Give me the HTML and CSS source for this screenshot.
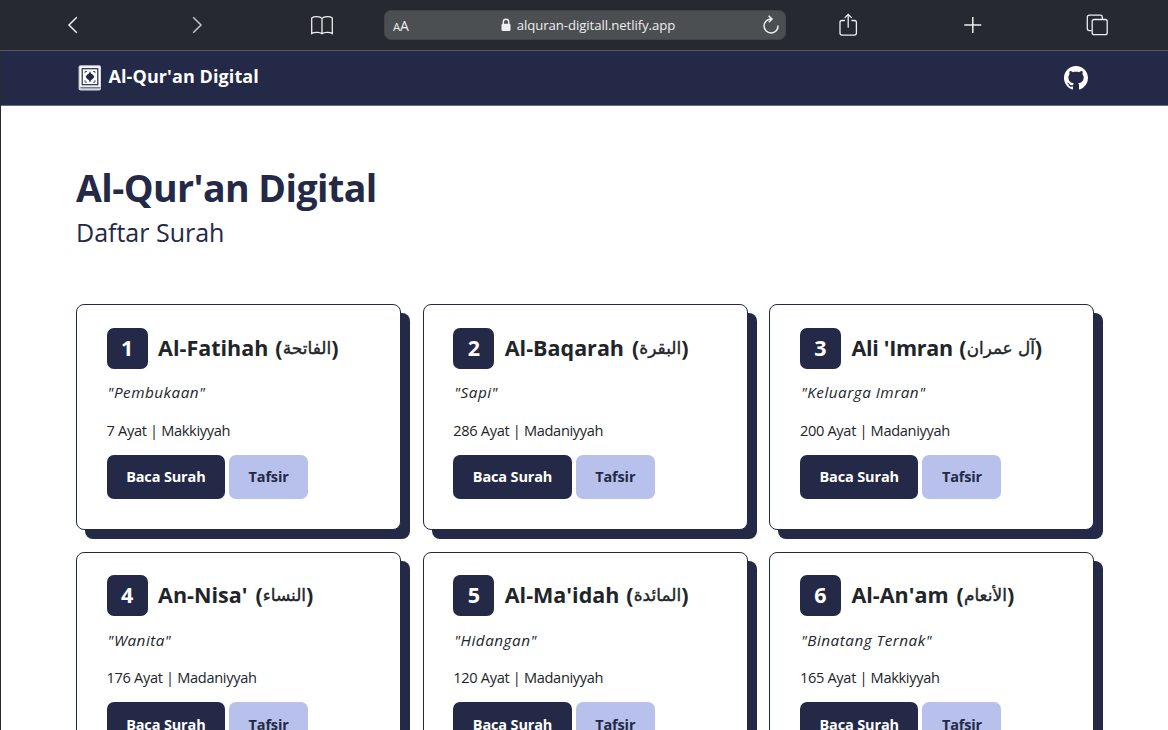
FILE: index.html
```html
<!DOCTYPE html>
<html lang="id">
<head>
<meta charset="utf-8">
<title>Al-Qur'an Digital</title>
<link rel="stylesheet" href="styles.css">
</head>
<body>
<div class="toolbar">
  <svg class="ico" width="26" height="26" viewBox="0 0 26 26"><path d="M16.8 5.2 9 13l7.8 7.8"/></svg>
  <svg class="ico dim" width="26" height="26" viewBox="0 0 26 26"><path d="m9.200 5.200 7.800 7.800-7.800 7.800"/></svg>
  <svg class="ico thin" width="26" height="26" viewBox="0 0 26 26"><path d="M13 6.400v15M13 6.400C11 4.200 5 4.100 2.700 6v15.500c2.600-1.600 8.300-1.600 10.300.2 2-1.800 7.700-1.800 10.300-.2V6C21 4.100 15 4.200 13 6.400Z"/></svg>
  <div class="address">
    <span class="reader"><small>A</small>A</span>
    <span class="site"><svg width="10" height="14" viewBox="0 0 10 14"><path d="M2.300 6V4a2.700 2.700 0 0 1 5.400 0v2" fill="none" stroke="#eceeef" stroke-width="1.400"/><rect x=".5" y="5.700" width="9" height="7.300" rx="1.200" fill="#eceeef"/></svg><span class="url">alquran-digitall.netlify.app</span></span>
    <svg class="reload" width="18" height="20" viewBox="0 0 18 20"><path d="M9.200 4A7 7 0 1 0 16 10.500M6.600.8 10 4 6.800 7.200"/></svg>
  </div>
  <svg class="ico thin" width="26" height="26" viewBox="0 0 26 26"><path d="M10 8.500H7a2 2 0 0 0-2 2v10.600a2 2 0 0 0 2 2h12.400a2 2 0 0 0 2-2V10.500a2 2 0 0 0-2-2h-3M13.200 15.800V2.400M9.700 5.900l3.500-3.500 3.500 3.500"/></svg>
  <svg class="ico" width="26" height="26" viewBox="0 0 26 26"><path d="M12.800 5v16M4.300 13h17"/></svg>
  <svg class="ico thin" width="26" height="26" viewBox="0 0 26 26"><path d="M7.600 18.600H5.300a2 2 0 0 1-2-2V5.200a2 2 0 0 1 2-2h11a2 2 0 0 1 2 2v2.300"/><rect x="8.200" y="7.500" width="15" height="15.200" rx="2"/></svg>
</div>

<div class="page">
  <nav class="navbar">
    <a class="brand">
      <svg width="24" height="26" viewBox="0 0 24 26"><rect x=".6" y=".3" width="22.400" height="25.200" rx="2" fill="#d5d8e2"/><rect x="2" y="1.500" width="20" height="20" fill="#fff"/><path d="M2.500 22.800h20" stroke="#4c5270"/><rect x="4.200" y="3.700" width="15.600" height="16" fill="none" stroke="#232946" stroke-width="1.200"/><path d="M7 8.200V6.500h2M17 8.200V6.500h-2M7 15.200v2h2M17 15.200v2h-2" fill="none" stroke="#50577a" stroke-width="1"/><path d="m12 6.200 1.100 2.300 1.600 1 1.700 2.300-1.700 2.300-1.600 1-1.100 2.300-1.100-2.300-1.600-1-1.700-2.300 1.700-2.300 1.600-1z" fill="#232946"/></svg>
      <span class="brand-name">Al-Qur'an Digital</span>
    </a>
    <svg class="github" width="24" height="24" viewBox="0 0 16 16" fill="#fff"><path d="M8 0C3.580 0 0 3.580 0 8c0 3.540 2.290 6.530 5.470 7.590.4.070.55-.17.55-.38 0-.19-.01-.82-.01-1.490-2.010.37-2.530-.49-2.690-.94-.09-.23-.48-.94-.82-1.130-.28-.15-.68-.52-.01-.53.63-.01 1.080.58 1.230.82.72 1.210 1.870.87 2.330.66.07-.52.28-.87.51-1.070-1.780-.2-3.640-.89-3.640-3.950 0-.87.31-1.590.82-2.150-.08-.2-.36-1.020.08-2.120 0 0 .67-.21 2.200.82.64-.18 1.320-.27 2-.27s1.360.09 2 .27c1.530-1.040 2.200-.82 2.200-.82.44 1.100.16 1.920.08 2.120.51.56.82 1.270.82 2.150 0 3.070-1.870 3.750-3.650 3.950.29.25.54.73.54 1.480 0 1.070-.01 1.930-.01 2.200 0 .21.15.46.55.38A8.010 8.010 0 0 0 16 8c0-4.420-3.580-8-8-8z"/></svg>
  </nav>
  <main class="content">
    <h1>Al-Qur'an Digital</h1>
    <p class="lead">Daftar Surah</p>
    <div class="grid">
      <article class="card"><h2><span class="num">1</span><span class="name n1">Al-Fatihah</span><span class="ar">(<bdi>الفاتحة</bdi>)</span></h2><p class="mean">"Pembukaan"</p><p class="info">7 Ayat | Makkiyyah</p><div class="actions"><a class="btn read">Baca Surah</a><a class="btn tafsir">Tafsir</a></div></article>
      <article class="card"><h2><span class="num">2</span><span class="name n2">Al-Baqarah</span><span class="ar">(<bdi>البقرة</bdi>)</span></h2><p class="mean">"Sapi"</p><p class="info">286 Ayat | Madaniyyah</p><div class="actions"><a class="btn read">Baca Surah</a><a class="btn tafsir">Tafsir</a></div></article>
      <article class="card"><h2><span class="num">3</span><span class="name n3">Ali 'Imran</span><span class="ar">(<bdi>آل عمران</bdi>)</span></h2><p class="mean">"Keluarga Imran"</p><p class="info">200 Ayat | Madaniyyah</p><div class="actions"><a class="btn read">Baca Surah</a><a class="btn tafsir">Tafsir</a></div></article>
      <article class="card"><h2><span class="num">4</span><span class="name n4">An-Nisa'</span><span class="ar">(<bdi>النساء</bdi>)</span></h2><p class="mean">"Wanita"</p><p class="info">176 Ayat | Madaniyyah</p><div class="actions"><a class="btn read">Baca Surah</a><a class="btn tafsir">Tafsir</a></div></article>
      <article class="card"><h2><span class="num">5</span><span class="name n5">Al-Ma'idah</span><span class="ar">(<bdi>المائدة</bdi>)</span></h2><p class="mean">"Hidangan"</p><p class="info">120 Ayat | Madaniyyah</p><div class="actions"><a class="btn read">Baca Surah</a><a class="btn tafsir">Tafsir</a></div></article>
      <article class="card"><h2><span class="num">6</span><span class="name n6">Al-An'am</span><span class="ar">(<bdi>الأنعام</bdi>)</span></h2><p class="mean">"Binatang Ternak"</p><p class="info">165 Ayat | Makkiyyah</p><div class="actions"><a class="btn read">Baca Surah</a><a class="btn tafsir">Tafsir</a></div></article>
    </div>
  </main>
</div>
</body>
</html>
```
FILE: styles.css
```css
* { box-sizing: border-box; }
body { margin: 0; height: 730px; overflow: hidden; background: #262a31; font-family: "Open Sans", "DejaVu Sans", sans-serif; color: #212529; }
h1, h2, p { margin: 0; white-space: nowrap; }
.toolbar { height: 51px; padding-left: 10.5px; border-bottom: 1px solid #555b61; background: #262a30; display: grid; grid-template-columns: repeat(3, 124.5px) 402px repeat(3, 124.5px); align-items: center; justify-items: center; }
.ico { fill: none; stroke: #eceeef; stroke-width: 1.5; }
.ico.thin { stroke-width: 1.3; }
.ico.dim { stroke: #c3c6c9; }
.address { width: 402px; height: 30px; border-radius: 7px; background: #4c4f52; border: 1px solid #414549; color: #eceeef; display: grid; grid-template-columns: 60px 1fr 60px; align-items: center; padding: 0 5px 0 8px; }
.reader { font-size: 14px; letter-spacing: -.2px; padding-top: 1px; }
.reader small { font-size: 11.5px; }
.site { display: flex; align-items: center; justify-content: center; gap: 6px; padding-left: 3px; font-size: 13.2px; letter-spacing: -.08px; white-space: nowrap; }
.reload { justify-self: end; fill: none; stroke: #eceeef; stroke-width: 1.5; }
.page { margin-left: 1px; height: 679px; background: #fff; overflow: hidden; }
.navbar { height: 55px; padding: 0 80px 0 77px; background: #232946; border-bottom: 1px solid #656a7f; display: flex; align-items: center; justify-content: space-between; }
.brand { display: flex; align-items: center; gap: 6.5px; color: #fff; font-size: 18px; font-weight: 700; letter-spacing: .09px; white-space: nowrap; }
.brand-name { padding-bottom: 4px; }
.content { padding: 56px 0 0 75px; color: #232946; }
h1 { font-size: 37.5px; line-height: 52px; font-weight: 700; letter-spacing: -.56px; }
.lead { font-size: 25px; line-height: 36px; }
.grid { margin-top: 54px; display: grid; grid-template-columns: repeat(3, 325px); column-gap: 21.7px; row-gap: 21.8px; }
.card { height: 226px; border: 1.5px solid #232946; border-radius: 8px; padding: 22.5px 29.6px; box-shadow: 9px 9px 0 #232946; color: #212529; background: #fff; }
h2 { height: 41px; display: flex; align-items: center; font-size: 21.5px; line-height: 38px; font-weight: 700; }
.num { flex: none; width: 41px; height: 41px; border-radius: 7px; background: #232946; color: #fff; display: flex; align-items: center; justify-content: center; padding-bottom: 1px; margin-right: 10.5px; }
.name { padding-bottom: 1px; }
.n1 { margin-right: 7px; }
.n2 { margin-right: 8px; }
.n3 { margin-right: 6.5px; letter-spacing: -.3px; }
.n4 { margin-right: 8px; }
.n5 { margin-right: 7px; }
.n6 { margin-right: 8px; }
.ar { display: flex; align-items: center; padding-bottom: 1px; }
.ar bdi { font-family: "DejaVu Sans", sans-serif; font-weight: 400; font-size: 17px; -webkit-text-stroke: .4px #212529; }
.n3 + .ar bdi { font-size: 16.8px; }
.mean { margin-top: 11.5px; padding-left: 1px; font-size: 15.3px; line-height: 24px; letter-spacing: .48px; font-style: italic; font-weight: 500; }
.info { margin-top: 13.5px; font-size: 14.6px; line-height: 24px; letter-spacing: -.33px; }
.actions { margin-top: 13px; display: flex; gap: 4px; }
.btn { height: 44px; border-radius: 7px; display: flex; align-items: center; justify-content: center; font-size: 14.5px; font-weight: 700; letter-spacing: -.15px; white-space: nowrap; }
.read { width: 118.5px; background: #232946; color: #fff; }
.tafsir { width: 79px; background: #b8c1ec; color: #232946; }
```
